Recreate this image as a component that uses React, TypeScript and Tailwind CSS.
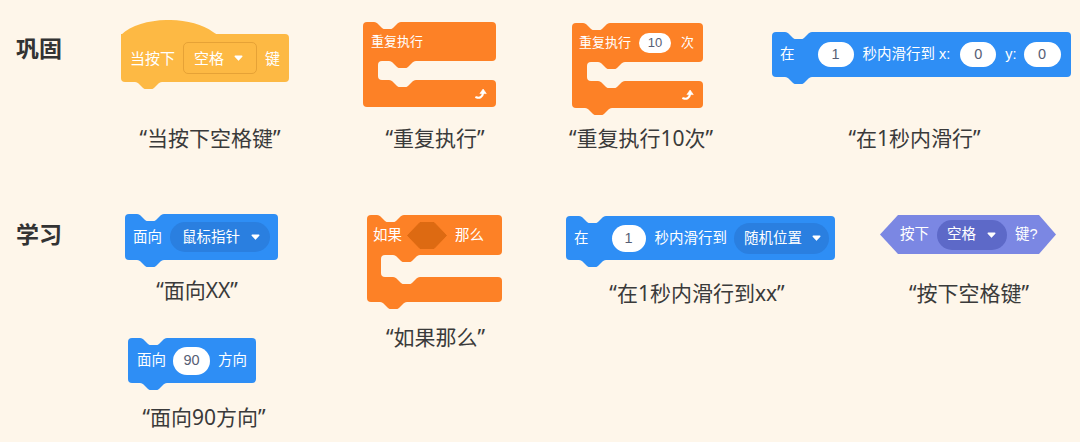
import React from "react";

const CREAM = "#fef6ea";
const YEL = "#fdb944";
const ORG = "#fd8126";
const BLUE = "#2e8ef5";

const NOTCH = "M0 0 C2 0 3 1 4 2 L8 6 C9 7 10 7 12 7 H15 C17 7 18 7 19 6 L23 2 C24 1 25 0 27 0 Z";

function Notch({ fill, className }: { fill: string; className: string }) {
  return (
    <svg width="27" height="7" viewBox="0 0 27 7" className={className}>
      <path d={NOTCH} fill={fill} />
    </svg>
  );
}

function Caret({ className = "" }: { className?: string }) {
  return (
    <svg width="9" height="6" viewBox="0 0 9 6" className={className}>
      <path d="M1.2 1.2 H7.8 L4.5 4.9 Z" fill="#fff" stroke="#fff" strokeWidth="1.4" strokeLinejoin="round" />
    </svg>
  );
}

function RepeatArrow() {
  return (
    <svg width="12" height="11" viewBox="0 0 12 11">
      <path d="M1.2 9.3 C4.2 10.4 7.6 9.4 8 5.2" stroke="#fff" strokeWidth="2.2" fill="none" strokeLinecap="round" />
      <path d="M4.9 5.6 L8.1 1 L11.3 5.6 Z" fill="#fff" stroke="#fff" strokeWidth="0.6" strokeLinejoin="round" />
    </svg>
  );
}

function Caption({ children, className = "" }: { children: React.ReactNode; className?: string }) {
  return (
    <div className={"whitespace-nowrap text-[21px] leading-[28px] text-[#3a3a3a] font-['Noto_Sans','Noto_Sans_CJK_SC',sans-serif] " + className}>
      {children}
    </div>
  );
}

function HatBlock() {
  return (
    <div className="flex w-[168px] flex-col">
      <svg width="100" height="15" viewBox="0 0 100 15" className="-mb-px block">
        <path d="M0 15 C20 -4.5 70 -4.5 92 12 C94.5 14 97 15 100 15 Z" fill={YEL} />
      </svg>
      <div className="relative flex h-[48px] items-center rounded-[4px] rounded-tl-none bg-[#fdb944] pl-[9px] text-[15px] leading-none text-white">
        <span>当按下</span>
        <div className="ml-[8px] flex h-[32px] items-center rounded-[5px] border border-[#e6a236] pl-[10px] pr-[13px]">
          <span>空格</span>
          <Caret className="ml-[10px]" />
        </div>
        <span className="ml-[8px]">键</span>
        <Notch fill={YEL} className="absolute left-[14px] top-full" />
      </div>
    </div>
  );
}

function RepeatForever() {
  return (
    <div className="relative w-[133px] text-white">
      <div className="relative flex h-[39px] items-center rounded-t-[4px] rounded-br-[4px] bg-[#fd8126] pl-[8px] text-[13px] leading-none">
        <Notch fill={CREAM} className="absolute left-[11px] top-0" />
        <span>重复执行</span>
      </div>
      <div className="flex h-[19px]">
        <div className="w-[19px] bg-[#fd8126]" />
        <div className="relative -ml-[4px] flex-1 rounded-l-[4px] bg-[#fef6ea]">
          <Notch fill={ORG} className="absolute left-[11px] top-0" />
        </div>
      </div>
      <div className="relative flex h-[27px] items-center justify-end rounded-b-[4px] rounded-tr-[4px] bg-[#fd8126] pr-[9px]">
        <Notch fill={CREAM} className="absolute left-[26px] top-0" />
        <RepeatArrow />
      </div>
    </div>
  );
}

function Repeat10() {
  return (
    <div className="relative w-[131px] text-white">
      <div className="relative flex h-[39px] items-center rounded-t-[4px] rounded-br-[4px] bg-[#fd8126] pl-[7px] text-[13px] leading-none">
        <Notch fill={CREAM} className="absolute left-[11px] top-0" />
        <span>重复执行</span>
        <div className="ml-[8px] flex h-[20px] w-[32px] items-center justify-center rounded-full bg-white text-[#575e75]">10</div>
        <span className="ml-[10px]">次</span>
      </div>
      <div className="flex h-[19px]">
        <div className="w-[19px] bg-[#fd8126]" />
        <div className="relative -ml-[4px] flex-1 rounded-l-[4px] bg-[#fef6ea]">
          <Notch fill={ORG} className="absolute left-[11px] top-0" />
        </div>
      </div>
      <div className="relative flex h-[27px] items-center justify-end rounded-b-[4px] rounded-tr-[4px] bg-[#fd8126] pr-[9px]">
        <Notch fill={CREAM} className="absolute left-[26px] top-0" />
        <RepeatArrow />
        <Notch fill={ORG} className="absolute left-[13px] top-full" />
      </div>
    </div>
  );
}

function GlideXY() {
  return (
    <div className="relative flex h-[45px] w-[299px] items-center rounded-[4px] bg-[#2e8ef5] pl-[8px] text-[14.5px] leading-none text-white">
      <Notch fill={CREAM} className="absolute left-[13px] top-0" />
      <span>在</span>
      <div className="ml-[23px] flex h-[25px] w-[36px] items-center justify-center rounded-full bg-white text-[#575e75]">1</div>
      <span className="ml-[9px]">秒内滑行到 x:</span>
      <div className="ml-[10px] flex h-[25px] w-[36px] items-center justify-center rounded-full bg-white text-[#575e75]">0</div>
      <span className="ml-[9px]">y:</span>
      <div className="ml-[7px] flex h-[25px] w-[37px] items-center justify-center rounded-full bg-white text-[#575e75]">0</div>
      <Notch fill={BLUE} className="absolute left-[13px] top-full" />
    </div>
  );
}

function FaceMouse() {
  return (
    <div className="relative flex h-[46px] w-[153px] items-center rounded-[4px] bg-[#2e8ef5] pl-[8px] text-[14.5px] leading-none text-white">
      <Notch fill={CREAM} className="absolute left-[12px] top-0" />
      <span>面向</span>
      <div className="ml-[8px] flex h-[30px] w-[100px] items-center rounded-full bg-[#2a7fe0] pl-[12px]">
        <span>鼠标指针</span>
        <Caret className="ml-[11px]" />
      </div>
      <Notch fill={BLUE} className="absolute left-[12px] top-full" />
    </div>
  );
}

function Face90() {
  return (
    <div className="relative flex h-[45px] w-[128px] items-center rounded-[4px] bg-[#2e8ef5] pl-[9px] text-[14.5px] leading-none text-white">
      <Notch fill={CREAM} className="absolute left-[12px] top-0" />
      <span>面向</span>
      <div className="ml-[7px] flex h-[28px] w-[37px] items-center justify-center rounded-full bg-white text-[#575e75]">90</div>
      <span className="ml-[8px]">方向</span>
      <Notch fill={BLUE} className="absolute left-[12px] top-full" />
    </div>
  );
}

function IfBlock() {
  return (
    <div className="relative w-[135px] text-white">
      <div className="relative flex h-[40px] items-center rounded-t-[4px] rounded-br-[4px] bg-[#fd8126] pl-[6px] text-[14.5px] leading-none">
        <Notch fill={CREAM} className="absolute left-[10px] top-0" />
        <span>如果</span>
        <svg width="40" height="27" viewBox="0 0 40 27" className="ml-[5px]">
          <path d="M13 0.5 H27 L39.5 13.5 L27 26.5 H13 L0.5 13.5 Z" fill="#dd6a12" stroke="#dd6a12" strokeWidth="1" strokeLinejoin="round" />
        </svg>
        <span className="ml-[8px]">那么</span>
      </div>
      <div className="flex h-[22px]">
        <div className="w-[18px] bg-[#fd8126]" />
        <div className="relative -ml-[4px] flex-1 rounded-l-[4px] bg-[#fef6ea]">
          <Notch fill={ORG} className="absolute left-[12px] top-0" />
        </div>
      </div>
      <div className="relative h-[25px] rounded-b-[4px] rounded-tr-[4px] bg-[#fd8126]">
        <Notch fill={CREAM} className="absolute left-[26px] top-0" />
        <Notch fill={ORG} className="absolute left-[13px] top-full" />
      </div>
    </div>
  );
}

function GlideRandom() {
  return (
    <div className="relative flex h-[44px] w-[269px] items-center rounded-[4px] bg-[#2e8ef5] pl-[8px] text-[14.5px] leading-none text-white">
      <Notch fill={CREAM} className="absolute left-[13px] top-0" />
      <span>在</span>
      <div className="ml-[23px] flex h-[27px] w-[34px] items-center justify-center rounded-full bg-white text-[#575e75]">1</div>
      <span className="ml-[9px]">秒内滑行到</span>
      <div className="ml-[7px] flex h-[31px] w-[95px] items-center rounded-full bg-[#2a7fe0] pl-[10px]">
        <span>随机位置</span>
        <Caret className="ml-[10px]" />
      </div>
      <Notch fill={BLUE} className="absolute left-[13px] top-full" />
    </div>
  );
}

function KeyPressed() {
  return (
    <div className="flex h-[39px] w-[176px] items-center bg-[#7b87e3] pl-[20px] text-[14.5px] leading-none text-white [clip-path:polygon(18px_0,calc(100%_-_17px)_0,100%_50%,calc(100%_-_17px)_100%,18px_100%,0_50%)]">
      <span>按下</span>
      <div className="ml-[8px] flex h-[30px] w-[70px] items-center rounded-full bg-[#5d69c8] pl-[10px]">
        <span>空格</span>
        <Caret className="ml-[11px]" />
      </div>
      <span className="ml-[8px]">键?</span>
    </div>
  );
}

export default function App() {
  return (
    <div className="h-[442px] w-[1080px] overflow-hidden bg-[#fef6ea] font-['Liberation_Sans','Noto_Sans_CJK_SC',sans-serif]">
      {/* Row 1 */}
      <div className="flex h-[152px] items-start">
        <div className="w-[100px] pl-[16px] pt-[33px] text-[23px] font-bold leading-[28px] text-[#333] font-['Noto_Sans_CJK_SC',sans-serif]">巩固</div>
        <div className="ml-[21px] flex w-[168px] flex-col items-center">
          <div className="h-[124px] w-full pt-[20px]"><HatBlock /></div>
          <Caption className="ml-[10px]">“当按下空格键”</Caption>
        </div>
        <div className="ml-[74px] flex w-[133px] flex-col items-center">
          <div className="h-[124px] w-full pt-[22px]"><RepeatForever /></div>
          <Caption className="ml-[11px]">“重复执行”</Caption>
        </div>
        <div className="ml-[76px] flex w-[131px] flex-col items-center">
          <div className="h-[124px] w-full pt-[23px]"><Repeat10 /></div>
          <Caption className="ml-[7px]">“重复执行10次”</Caption>
        </div>
        <div className="ml-[69px] flex w-[299px] flex-col items-center">
          <div className="h-[124px] w-full pt-[32px]"><GlideXY /></div>
          <Caption className="mr-[14px]">“在1秒内滑行”</Caption>
        </div>
      </div>
      {/* Row 2 */}
      <div className="flex items-start">
        <div className="w-[100px] pl-[16px] pt-[67px] text-[23px] font-bold leading-[28px] text-[#333] font-['Noto_Sans_CJK_SC',sans-serif]">学习</div>
        <div className="ml-[25px] flex w-[153px] flex-col items-center">
          <div className="w-full pt-[62px]"><FaceMouse /></div>
          <Caption className="mr-[9px] mt-[16px]">“面向XX”</Caption>
          <div className="mr-[19px] mt-[34px]"><Face90 /></div>
          <Caption className="ml-[5px] mt-[20px]">“面向90方向”</Caption>
        </div>
        <div className="ml-[89px] flex w-[135px] flex-col items-center">
          <div className="w-full pt-[63px]"><IfBlock /></div>
          <Caption className="ml-[2px] mt-[21px]">“如果那么”</Caption>
        </div>
        <div className="ml-[64px] flex w-[269px] flex-col items-center">
          <div className="w-full pt-[64px]"><GlideRandom /></div>
          <Caption className="mr-[7px] mt-[19px]">“在1秒内滑行到xx”</Caption>
        </div>
        <div className="ml-[45px] flex w-[176px] flex-col items-center">
          <div className="w-full pt-[63px]"><KeyPressed /></div>
          <Caption className="ml-[2px] mt-[25px]">“按下空格键”</Caption>
        </div>
      </div>
    </div>
  );
}
